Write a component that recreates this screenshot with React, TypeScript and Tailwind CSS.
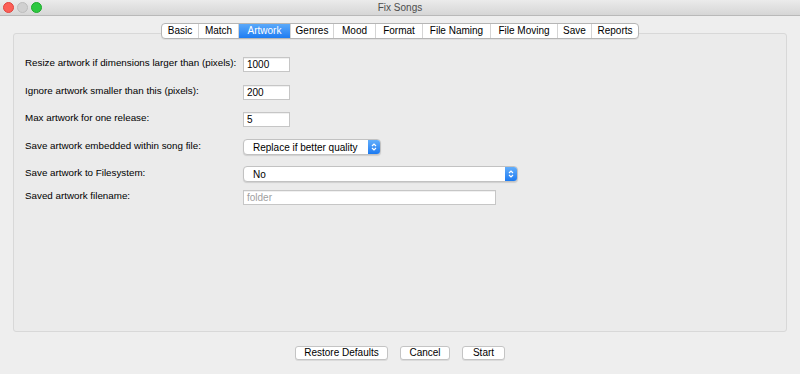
import React from 'react';

const tabs = [
  { name: 'Basic', w: 'w-[36px]' },
  { name: 'Match', w: 'w-[40px]' },
  { name: 'Artwork', w: 'w-[52px]' },
  { name: 'Genres', w: 'w-[43px]' },
  { name: 'Mood', w: 'w-[42px]' },
  { name: 'Format', w: 'w-[47px]' },
  { name: 'File Naming', w: 'w-[68px]' },
  { name: 'File Moving', w: 'w-[67px]' },
  { name: 'Save', w: 'w-[34px]' },
  { name: 'Reports', w: 'w-[47px]' },
];

function TitleBar() {
  return (
    <div className="h-[16px] grid grid-cols-[1fr_auto_1fr] items-center bg-gradient-to-b from-[#ebebeb] to-[#d6d6d6] border-b border-[#b9b9b9]">
      <div className="flex items-center gap-[3px] pl-[3px]">
        <span className="w-[11px] h-[11px] rounded-full bg-[#fc5f57] border border-[#e0443e]" />
        <span className="w-[11px] h-[11px] rounded-full bg-[#d0d0d0] border border-[#bdbdbd]" />
        <span className="w-[11px] h-[11px] rounded-full bg-[#2dc840] border border-[#1daa2c]" />
      </div>
      <div className="text-[10px] text-[#4d4d4d]">Fix Songs</div>
      <div />
    </div>
  );
}

function Tabs() {
  return (
    <div className="relative z-10 flex justify-center -mb-[6px]">
      <div className="flex h-[16px] bg-white border border-[#b5b5b5] rounded-[4px] overflow-hidden shadow-[0_1px_0_rgba(0,0,0,0.05)]">
        {tabs.map((t, i) => (
          <div
            key={t.name}
            className={
              'flex items-center justify-center text-[10px] leading-none ' +
              t.w +
              (t.name === 'Artwork'
                ? ' bg-gradient-to-b from-[#5aa9fa] to-[#1c7cf2] text-white'
                : ' text-black') +
              (i > 0 ? ' border-l border-[#d4d4d4]' : '')
            }
          >
            {t.name}
          </div>
        ))}
      </div>
    </div>
  );
}

function TextBox({ value, w, placeholder }: { value?: string; w: string; placeholder?: string }) {
  return (
    <div
      className={
        'h-[15px] bg-white border border-[#c6c6c6] shadow-[inset_0_1px_0_rgba(0,0,0,0.06)] flex items-center pl-[3px] text-[10px] ' +
        w
      }
    >
      {value ? <span className="text-black">{value}</span> : <span className="text-[#a0a0a0]">{placeholder}</span>}
    </div>
  );
}

function Select({ value, w }: { value: string; w: string }) {
  return (
    <div
      className={
        'h-[16px] flex bg-white border border-[#c2c2c2] rounded-[4px] shadow-[0_1px_1px_rgba(0,0,0,0.12)] overflow-hidden ' +
        w
      }
    >
      <div className="flex-1 flex items-center pl-[9px] text-[10px] text-black">{value}</div>
      <div className="w-[12px] flex items-center justify-center bg-gradient-to-b from-[#62aefb] to-[#1a7af1]">
        <svg width="6" height="10" viewBox="0 0 6 10" fill="none" stroke="white" strokeWidth="1.2">
          <path d="M1 4 L3 2 L5 4" />
          <path d="M1 6 L3 8 L5 6" />
        </svg>
      </div>
    </div>
  );
}

function Row({ label, children, mt }: { label: string; children: React.ReactNode; mt: string }) {
  return (
    <div className={'flex items-center ' + mt}>
      <div className="w-[218px] text-[9.8px] text-black -mt-[2px]">{label}</div>
      {children}
    </div>
  );
}

function Button({ label, w }: { label: string; w: string }) {
  return (
    <button
      className={
        'h-[14px] bg-white border border-[#c4c4c4] rounded-[3px] shadow-[0_1px_0_rgba(0,0,0,0.08)] text-[10px] text-black leading-none flex items-center justify-center ' +
        w
      }
    >
      {label}
    </button>
  );
}

export default function App() {
  return (
    <div className="w-[800px] h-[374px] bg-[#eeeeee] flex flex-col font-['Liberation_Sans',Arial,sans-serif]">
      <TitleBar />
      <div className="px-[13px] pt-[7px]">
        <Tabs />
        <div className="h-[299px] bg-[#ebebeb] border border-[#d8d8d8] rounded-[3px] pl-[11px] pt-[23px]">
          <Row label="Resize artwork if dimensions larger than (pixels):" mt="">
            <TextBox value="1000" w="w-[47px]" />
          </Row>
          <Row label="Ignore artwork smaller than this (pixels):" mt="mt-[13px]">
            <TextBox value="200" w="w-[47px]" />
          </Row>
          <Row label="Max artwork for one release:" mt="mt-[12px]">
            <TextBox value="5" w="w-[47px]" />
          </Row>
          <Row label="Save artwork embedded within song file:" mt="mt-[12px]">
            <Select value="Replace if better quality" w="w-[138px]" />
          </Row>
          <Row label="Save artwork to Filesystem:" mt="mt-[11px]">
            <Select value="No" w="w-[275px]" />
          </Row>
          <Row label="Saved artwork filename:" mt="mt-[8px]">
            <TextBox placeholder="folder" w="w-[253px]" />
          </Row>
        </div>
      </div>
      <div className="flex justify-center gap-[12px] mt-[14px]">
        <Button label="Restore Defaults" w="w-[93px]" />
        <Button label="Cancel" w="w-[50px]" />
        <Button label="Start" w="w-[43px]" />
      </div>
    </div>
  );
}
